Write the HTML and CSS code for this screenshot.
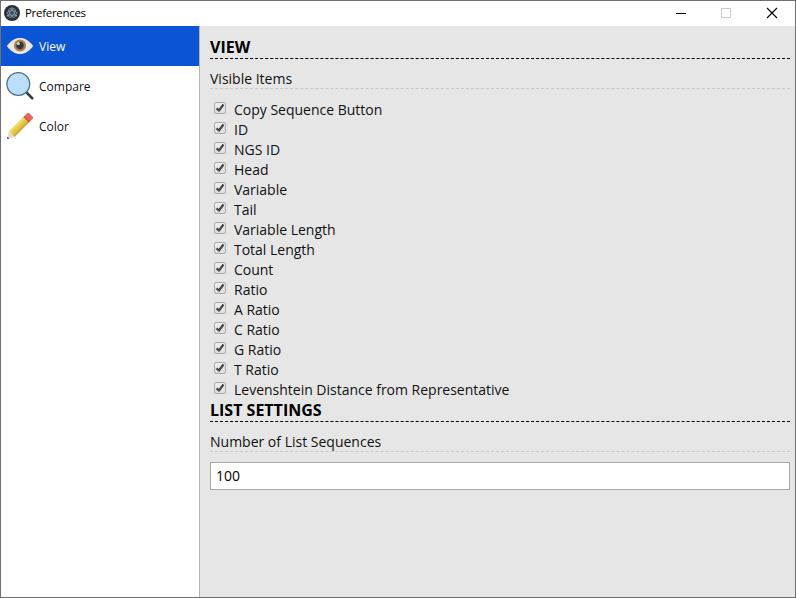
FILE: index.html
```html
<!DOCTYPE html>
<html lang="en">
<head>
<meta charset="utf-8">
<title>Preferences</title>
<link rel="stylesheet" href="styles.css">
</head>
<body>
<div class="window">
  <header class="titlebar">
    <svg class="app-icon" width="16" height="16" viewBox="0 0 16 16">
      <circle cx="8" cy="8" r="8" fill="#2b2e3a"/>
      <g fill="none" stroke="#9fcbd6" stroke-width=".6">
        <ellipse cx="8" cy="8" rx="5" ry="2.200"/>
        <ellipse cx="8" cy="8" rx="5" ry="2.200" transform="rotate(60 8 8)"/>
        <ellipse cx="8" cy="8" rx="5" ry="2.200" transform="rotate(120 8 8)"/>
      </g>
      <g fill="#9fcbd6"><circle cx="8" cy="8" r=".6"/><circle cx="3.700" cy="10.700" r=".7"/><circle cx="12.300" cy="10.700" r=".7"/><circle cx="8" cy="3" r=".7"/></g>
    </svg>
    <span class="title">Preferences</span>
    <svg class="controls" width="102" height="12" viewBox="0 0 102 12" fill="none" shape-rendering="crispEdges">
      <path d="M0 6.500h10" stroke="#000"/>
      <rect x="45.500" y="1.500" width="9" height="9" stroke="#ccc"/>
      <path d="M91 1l10 10M101 1L91 11" stroke="#000" stroke-width="1.100" shape-rendering="auto"/>
    </svg>
  </header>
  <div class="body">
    <nav class="sidebar">
      <div class="item selected">
        <svg width="28" height="28" viewBox="0 0 28 28">
          <path d="M.8 14C5 8.500 9 6 14 6s9 2.500 13.200 8c-4.200 5.500-8.200 8-13.200 8S5 19.500.8 14z" fill="#e9e7e8"/>
          <circle cx="14" cy="13.500" r="6" fill="#a97b4f"/>
          <circle cx="14" cy="13.500" r="3.700" fill="#323438"/>
          <circle cx="12.300" cy="11.500" r="1.600" fill="#d6d6d6"/>
        </svg>
        <span>View</span>
      </div>
      <div class="item">
        <svg width="28" height="28" viewBox="0 0 28 28">
          <path d="M20 20l7 7" stroke="#294450" stroke-width="2.500"/>
          <circle cx="12.300" cy="12" r="11.400" fill="#bbdefb" stroke="#4b7480" stroke-width="1.300"/>
        </svg>
        <span>Compare</span>
      </div>
      <div class="item">
        <svg width="28" height="28" viewBox="0 0 28 28">
          <path d="M3 19.500L18.500 4l5.500 5.500L8.500 25z" fill="#e5c84b"/>
          <path d="M3 19.500L18.500 4l1.700 1.700L4.700 21.200z" fill="#f0da60"/>
          <path d="M6.700 23.200L22.200 7.700 24 9.500 8.500 25z" fill="#d3b03f"/>
          <path d="M3 19.500L1 27l7.500-2z" fill="#ead9c4"/>
          <path d="M1.500 24.700L1 27l2.400-.6z" fill="#333"/>
          <path d="M17.500 5L21.500 1q1-.6 2 .4l3 3q1 1 .4 2L23 10.500z" fill="#e9665c"/>
          <path d="M17.500 5l1-1 5.500 5.500-1 1z" fill="#d94f48"/>
        </svg>
        <span>Color</span>
      </div>
    </nav>
    <main class="content">
      <h1>VIEW</h1>
      <h2>Visible Items</h2>
      <div class="list">
        <label><input type="checkbox" checked><span>Copy Sequence Button</span></label>
        <label><input type="checkbox" checked><span>ID</span></label>
        <label><input type="checkbox" checked><span>NGS ID</span></label>
        <label><input type="checkbox" checked><span>Head</span></label>
        <label><input type="checkbox" checked><span>Variable</span></label>
        <label><input type="checkbox" checked><span>Tail</span></label>
        <label><input type="checkbox" checked><span>Variable Length</span></label>
        <label><input type="checkbox" checked><span>Total Length</span></label>
        <label><input type="checkbox" checked><span>Count</span></label>
        <label><input type="checkbox" checked><span>Ratio</span></label>
        <label><input type="checkbox" checked><span>A Ratio</span></label>
        <label><input type="checkbox" checked><span>C Ratio</span></label>
        <label><input type="checkbox" checked><span>G Ratio</span></label>
        <label><input type="checkbox" checked><span>T Ratio</span></label>
        <label><input type="checkbox" checked><span>Levenshtein Distance from Representative</span></label>
      </div>
      <h1>LIST SETTINGS</h1>
      <h2 class="compact">Number of List Sequences</h2>
      <input class="field" type="text" value="100">
    </main>
  </div>
</div>
</body>
</html>
```

FILE: styles.css
```css
* { box-sizing: border-box; }
body {
  margin: 0;
  font: 14px/20px "Open Sans", sans-serif;
  color: #111;
}
.window {
  display: flex;
  flex-direction: column;
  width: 796px;
  height: 598px;
  border: 1px solid #707070;
  background: #fff;
}
.titlebar {
  display: flex;
  align-items: center;
  height: 25px;
  padding: 0 17px 0 3px;
  color: #000;
}
.app-icon { margin-bottom: 1px; }
.title {
  margin: 0 0 2px 5px;
  font-size: 11.5px;
  letter-spacing: -.3px;
}
.controls { margin: 0 0 1px auto; }
.body {
  flex: 1;
  display: flex;
  min-height: 0;
}
.sidebar {
  width: 199px;
  border-right: 1px solid #b5b5b5;
}
.item {
  display: flex;
  align-items: center;
  height: 40px;
  padding-left: 5px;
  gap: 5px;
  font-size: 12px;
}
.item span { padding-top: 2px; }
.selected {
  background: #0a54d5;
  color: #fff;
}
.content {
  flex: 1;
  padding: 11px 5px 0 10px;
  background: #e6e6e6;
}
h1 {
  height: 22px;
  margin: 0 0 10px;
  border-bottom: 1px dashed #000;
  font-size: 16px;
  line-height: 20px;
  font-weight: 700;
  color: #000;
}
h2 {
  height: 20px;
  margin: 0 0 11px;
  border-bottom: 1px dashed #c8c8c8;
  font-size: 14px;
  line-height: 20px;
  font-weight: 400;
}
.compact { margin-bottom: 10px; }
label {
  display: flex;
  height: 20px;
}
label span { letter-spacing: -.01px; }
label input {
  appearance: none;
  width: 12px;
  height: 12px;
  margin: 2px 8px 0 4px;
  border: 1px solid #acacac;
  border-radius: 2px;
  background: url("data:image/svg+xml,%3Csvg xmlns='http://www.w3.org/2000/svg' viewBox='0 0 10 10'%3E%3Cpath d='M1.500 5.300L4 7.500 8.500 1.500' fill='none' stroke='%23444' stroke-width='2.200'/%3E%3C/svg%3E") 0 0 / 10px 10px no-repeat, linear-gradient(#eee, #dedede);
}
.field {
  display: block;
  width: 100%;
  height: 28px;
  padding: 0 5px 1px;
  border: 1px solid #a9a9a9;
  background: #fff;
  color: #000;
  font: 14px "Open Sans", sans-serif;
}
```
